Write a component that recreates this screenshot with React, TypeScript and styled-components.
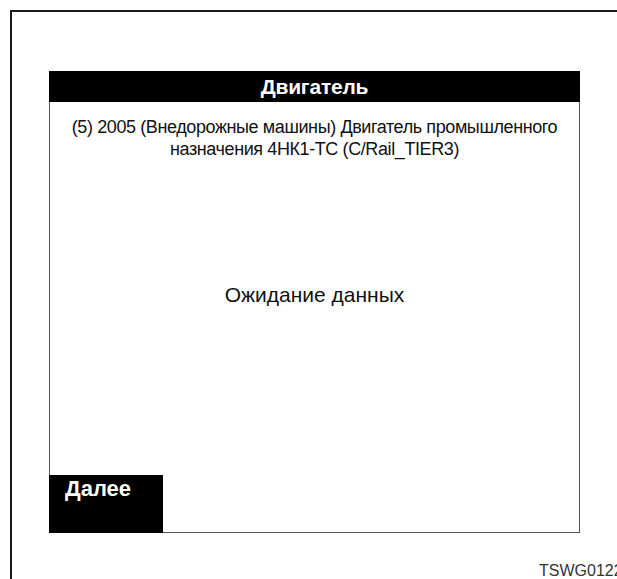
import styled, { createGlobalStyle } from 'styled-components'

const GlobalStyle = createGlobalStyle`
    html, body {
        margin: 0;
        padding: 0;
        background: #fff;
    }
    body {
        font-family: "Liberation Sans", Arial, sans-serif;
        color: #111;
    }
`

export default function App() {
    return (
        <>
            <GlobalStyle />
            <Frame>
                <Panel>
                    <Header>Двигатель</Header>
                    <Description>
                        (5) 2005 (Внедорожные машины) Двигатель промышленного
                        <br />
                        назначения 4НК1-ТС (C/Rail_TIER3)
                    </Description>
                    <Status>Ожидание данных</Status>
                    <Footer>
                        <NextButton>Далее</NextButton>
                    </Footer>
                </Panel>
                <Code>TSWG0122</Code>
            </Frame>
        </>
    )
}

// the sheet border only shows its top and left edges, the rest is cut off
const Frame = styled.div`
    margin: 10px 0 0 10px;
    width: 607px;
    height: 569px;
    overflow: hidden;
    box-sizing: border-box;
    border-top: 2px solid #1a1a1a;
    border-left: 2px solid #1a1a1a;
    padding: 59px 0 0 37px;
`

const Panel = styled.div`
    width: 531px;
    height: 462px;
    box-sizing: border-box;
    border: 1px solid #555;
    border-top: none;
    display: flex;
    flex-direction: column;
`

const Header = styled.div`
    height: 31px;
    margin: 0 -1px;
    background: #000;
    color: #fff;
    font-size: 21px;
    font-weight: bold;
    letter-spacing: -0.2px;
    display: flex;
    align-items: center;
    justify-content: center;
`

const Description = styled.div`
    padding-top: 14px;
    font-size: 18px;
    line-height: 22px;
    letter-spacing: -0.4px;
    text-align: center;
`

const Status = styled.div`
    flex: 1;
    display: flex;
    align-items: center;
    justify-content: center;
    padding-bottom: 46px;
    font-size: 21px;
`

const Footer = styled.div`
    display: flex;
`

const NextButton = styled.div`
    width: 114px;
    height: 58px;
    margin: 0 0 -1px -1px;
    box-sizing: border-box;
    padding: 1px 0 0 16px;
    background: #000;
    color: #fff;
    font-size: 22px;
    font-weight: bold;
`

const Code = styled.div`
    margin: 29px 0 0 490px;
    font-size: 16px;
    color: #333;
    white-space: nowrap;
`
